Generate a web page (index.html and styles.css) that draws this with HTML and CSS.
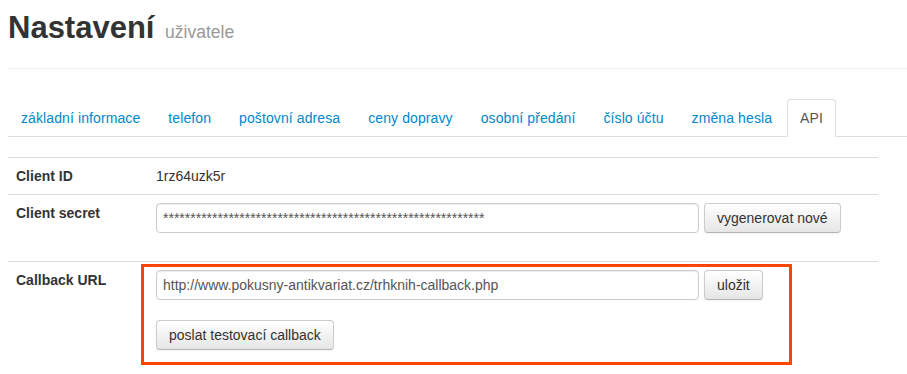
FILE: index.html
```html
<!DOCTYPE html>
<html>
<head>
    <title>Nastavení uživatele</title>
    <link rel="stylesheet" href="styles.css">
</head>
<body>
    <div class="page-header">
        <h1>Nastavení <small>uživatele</small></h1>
    </div>

    <!-- Settings tabs -->
    <ul class="nav-tabs">
        <li><a href="#">základní informace</a></li>
        <li><a href="#">telefon</a></li>
        <li><a href="#">poštovní adresa</a></li>
        <li><a href="#">ceny dopravy</a></li>
        <li><a href="#">osobní předání</a></li>
        <li><a href="#">číslo účtu</a></li>
        <li><a href="#">změna hesla</a></li>
        <li class="active"><a href="#">API</a></li>
    </ul>

    <table class="settings">
        <tr>
            <th>Client ID</th>
            <td>1rz64uzk5r</td>
        </tr>
        <tr>
            <th>Client secret</th>
            <td>
                <div class="field-row">
                    <input type="text" class="secret" value="***********************************************************" readonly>
                    <button>vygenerovat nové</button>
                </div>
            </td>
        </tr>
        <tr>
            <th>Callback URL</th>
            <td>
                <div class="callback">
                    <div class="field-row">
                        <input type="text" value="http://www.pokusny-antikvariat.cz/trhknih-callback.php">
                        <button>uložit</button>
                    </div>
                    <button>poslat testovací callback</button>
                    <span class="highlight"></span>
                </div>
            </td>
        </tr>
    </table>
</body>
</html>
```

FILE: styles.css
```css
* {
    margin: 0;
    padding: 0;
    box-sizing: border-box;
}
html {
    overflow-x: hidden;
}
body {
    padding: 8px 0 0 8px;
    background-color: #fff;
    color: #333;
    font-family: "Liberation Sans", Arial, sans-serif;
    font-size: 14px;
    line-height: 20px;
}
.page-header {
    padding-bottom: 20px;
    border-bottom: 1px solid #eee;
}
.page-header h1 {
    font-size: 31px;
    line-height: 40px;
    font-weight: bold;
    color: #333;
}
.page-header small {
    margin-left: 2px;
    font-size: 17.5px;
    line-height: 20px;
    font-weight: normal;
    color: #999;
}
.nav-tabs {
    display: flex;
    list-style: none;
    margin-top: 30px;
    border-bottom: 1px solid #ddd;
}
.nav-tabs li {
    margin-right: 2px;
    margin-bottom: -1px;
}
.nav-tabs a {
    display: block;
    padding: 8px 12px;
    line-height: 20px;
    letter-spacing: 0.1px;
    border: 1px solid transparent;
    border-radius: 4px 4px 0 0;
    color: #0088cc;
    text-decoration: none;
}
.nav-tabs .active a {
    color: #555;
    background-color: #fff;
    border-color: #ddd #ddd transparent;
}
.settings {
    width: 870px;
    margin-top: 20px;
    border-collapse: collapse;
}
.settings th,
.settings td {
    padding: 8px;
    border-top: 1px solid #ddd;
    text-align: left;
    vertical-align: top;
    line-height: 20px;
}
.settings th {
    width: 140px;
    font-weight: bold;
}
.field-row {
    display: flex;
    gap: 5px;
    margin-bottom: 20px;
}
input {
    width: 543px;
    height: 30px;
    padding: 4px 6px;
    border: 1px solid #ccc;
    border-radius: 4px;
    box-shadow: inset 0 1px 1px rgba(0, 0, 0, 0.075);
    font-family: "Liberation Sans", Arial, sans-serif;
    font-size: 14px;
    color: #555;
    background-color: #fff;
    outline: none;
}
button {
    height: 30px;
    padding: 4px 12px;
    font-family: "Liberation Sans", Arial, sans-serif;
    font-size: 14px;
    line-height: 20px;
    color: #333;
    background-image: linear-gradient(#ffffff, #e6e6e6);
    border: 1px solid #ccc;
    border-bottom-color: #b3b3b3;
    border-radius: 4px;
    box-shadow: inset 0 1px 0 rgba(255, 255, 255, 0.2), 0 1px 2px rgba(0, 0, 0, 0.05);
    cursor: pointer;
}
.callback {
    position: relative;
    padding-bottom: 12px;
}
/* red annotation frame over the callback block */
.highlight {
    position: absolute;
    left: -15px;
    top: -6px;
    width: 651px;
    height: 101px;
    border: 3px solid #ff4500;
    pointer-events: none;
}
```
